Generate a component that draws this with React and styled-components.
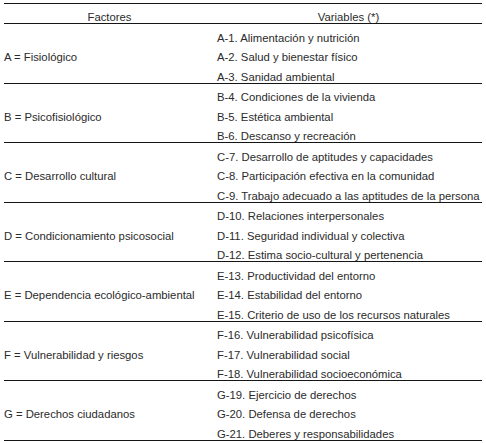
import React from 'react';
import styled, { createGlobalStyle } from 'styled-components';

const GlobalStyle = createGlobalStyle`
  html, body {
    margin: 0;
    padding: 0;
    background: #ffffff;
  }
  body {
    font-family: "Liberation Sans", Arial, sans-serif;
    font-size: 11.3px;
    color: #2b2b2b;
  }
`;

const Page = styled.div`
  padding: 3px 4px;
  width: 478px;
`;

const Table = styled.div`
  border-top: 1px solid #151515;
`;

const HeaderRow = styled.div`
  display: grid;
  grid-template-columns: 211px 1fr;
  border-bottom: 1px solid #151515;
`;

const HeaderCell = styled.div`
  height: 19px;
  display: flex;
  align-items: flex-end;
  justify-content: center;
  line-height: 11px;
`;

const Group = styled.div`
  display: grid;
  grid-template-columns: 211px 1fr;
  grid-template-rows: repeat(3, 19.5px);
  border-bottom: 1px solid #151515;
`;

const Cell = styled.div`
  display: flex;
  align-items: flex-end;
  line-height: 11px;
  white-space: nowrap;
`;

const FactorCell = styled(Cell)`
  grid-column: 1;
  grid-row: 2;
`;

const VariableCell = styled(Cell)`
  grid-column: 2;
  grid-row: ${(p) => p.$row};
  padding-left: 2px;
`;

const data = [
  {
    factor: 'A = Fisiológico',
    vars: ['A-1. Alimentación y nutrición', 'A-2. Salud y bienestar físico', 'A-3. Sanidad ambiental'],
  },
  {
    factor: 'B = Psicofisiológico',
    vars: ['B-4. Condiciones de la vivienda', 'B-5. Estética ambiental', 'B-6. Descanso y recreación'],
  },
  {
    factor: 'C = Desarrollo cultural',
    vars: [
      'C-7. Desarrollo de aptitudes y capacidades',
      'C-8. Participación efectiva en la comunidad',
      'C-9. Trabajo adecuado a las aptitudes de la persona',
    ],
  },
  {
    factor: 'D = Condicionamiento psicosocial',
    vars: [
      'D-10. Relaciones interpersonales',
      'D-11. Seguridad individual y colectiva',
      'D-12. Estima socio-cultural y pertenencia',
    ],
  },
  {
    factor: 'E = Dependencia ecológico-ambiental',
    vars: [
      'E-13. Productividad del entorno',
      'E-14. Estabilidad del entorno',
      'E-15. Criterio de uso de los recursos naturales',
    ],
  },
  {
    factor: 'F = Vulnerabilidad y riesgos',
    vars: ['F-16. Vulnerabilidad psicofísica', 'F-17. Vulnerabilidad social', 'F-18. Vulnerabilidad socioeconómica'],
  },
  {
    factor: 'G = Derechos ciudadanos',
    vars: ['G-19. Ejercicio de derechos', 'G-20. Defensa de derechos', 'G-21. Deberes y responsabilidades'],
  },
];

export default function App() {
  return (
    <>
      <GlobalStyle />
      <Page>
        <Table>
          <HeaderRow>
            <HeaderCell>Factores</HeaderCell>
            <HeaderCell>Variables (*)</HeaderCell>
          </HeaderRow>
          {data.map((g) => (
            <Group key={g.factor}>
              <FactorCell>{g.factor}</FactorCell>
              {g.vars.map((v, i) => (
                <VariableCell key={v} $row={i + 1}>
                  {v}
                </VariableCell>
              ))}
            </Group>
          ))}
        </Table>
      </Page>
    </>
  );
}
